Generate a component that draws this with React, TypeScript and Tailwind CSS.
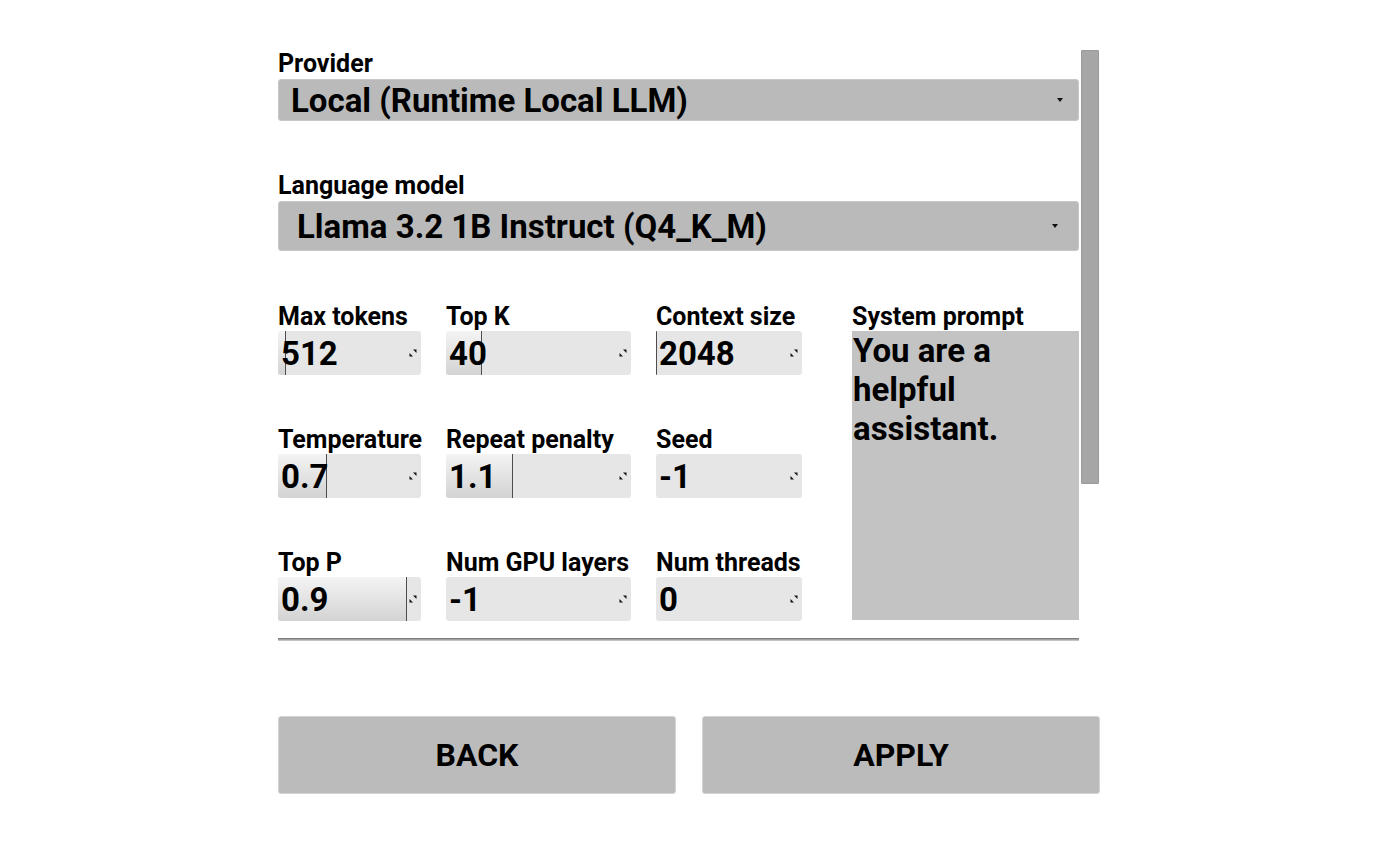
import React from "react";

interface NumField {
  label: string;
  value: string;
  width: number;
  fill: number;
}

const font = { fontFamily: "Roboto, 'Noto Sans', sans-serif" };

function SpinMark() {
  return (
    <svg width="8" height="8" viewBox="0 0 8 8" className="mr-[1px] shrink-0">
      <path d="M4 0.5h3.5v3.5z" fill="#111" />
      <path d="M0.5 4v3.5h3.5z" fill="#111" />
    </svg>
  );
}

function Caret() {
  return (
    <svg width="6" height="4" viewBox="0 0 6 4">
      <path d="M0 0h6L3 4z" fill="#111" />
    </svg>
  );
}

function NumberInput({ field }: { field: NumField }) {
  return (
    <div className="flex flex-col">
      <div className="h-[29px] text-[25px] font-bold leading-[29px] text-black whitespace-nowrap">
        {field.label}
      </div>
      <div
        className="relative flex h-[44px] items-center rounded-[3px] bg-[#e6e6e6] pr-[3px]"
        style={{ width: field.width }}
      >
        {field.fill > 0 && (
          <div
            className="absolute left-0 top-0 bottom-0 rounded-l-[3px] border-r border-[#4d4d4d] bg-gradient-to-b from-[#f4f4f4] to-[#d3d3d3]"
            style={{ width: field.fill }}
          />
        )}
        <span className="relative flex-1 pl-[3px] text-[33px] font-bold leading-none text-black">
          {field.value}
        </span>
        <SpinMark />
      </div>
    </div>
  );
}

const col1: NumField[] = [
  { label: "Max tokens", value: "512", width: 143, fill: 8 },
  { label: "Temperature", value: "0.7", width: 143, fill: 49 },
  { label: "Top P", value: "0.9", width: 143, fill: 129 },
];
const col2: NumField[] = [
  { label: "Top K", value: "40", width: 185, fill: 36 },
  { label: "Repeat penalty", value: "1.1", width: 185, fill: 67 },
  { label: "Num GPU layers", value: "-1", width: 185, fill: 0 },
];
const col3: NumField[] = [
  { label: "Context size", value: "2048", width: 146, fill: 1 },
  { label: "Seed", value: "-1", width: 146, fill: 0 },
  { label: "Num threads", value: "0", width: 146, fill: 0 },
];

export default function App() {
  return (
    <div className="min-h-[844px] bg-white text-black" style={font}>
      <div className="ml-[278px] w-[822px] pt-[48px]">
        <div className="flex gap-[2px]">
          <div className="w-[801px]">
            {/* provider */}
            <div className="h-[31px] text-[25px] font-bold leading-[31px]">Provider</div>
            <div className="flex h-[42px] items-center justify-between rounded-[3px] border border-[#c8c8c8] bg-[#bababa] pl-[12px] pr-[15px]">
              <span className="text-[33px] font-bold leading-none">
                Local (Runtime Local LLM)
              </span>
              <Caret />
            </div>

            {/* language model */}
            <div className="mt-[50px] h-[30px] text-[25px] font-bold leading-[30px]">
              Language model
            </div>
            <div className="flex h-[50px] items-center justify-between rounded-[3px] border border-[#c8c8c8] bg-[#bababa] pl-[18px] pr-[20px]">
              <span className="text-[33px] font-bold leading-none">
                Llama 3.2 1B Instruct (Q4_K_M)
              </span>
              <Caret />
            </div>

            {/* parameters */}
            <div className="mt-[51px] flex">
              {[col1, col2, col3].map((col, i) => (
                <div
                  key={i}
                  className={
                    i === 0
                      ? "flex w-[143px] flex-col gap-[50px]"
                      : i === 1
                        ? "ml-[25px] flex w-[185px] flex-col gap-[50px]"
                        : "ml-[25px] flex w-[146px] flex-col gap-[50px]"
                  }
                >
                  {col.map((f) => (
                    <NumberInput key={f.label} field={f} />
                  ))}
                </div>
              ))}
              <div className="ml-[50px] flex w-[227px] flex-col">
                <div className="h-[29px] text-[25px] font-bold leading-[29px] whitespace-nowrap">
                  System prompt
                </div>
                <div className="h-[289px] bg-[#c3c3c3] pl-[1px] text-[33px] font-bold leading-[39px]">
                  You are a
                  <br />
                  helpful
                  <br />
                  assistant.
                </div>
              </div>
            </div>

            <div className="mt-[17px] h-[3px] bg-gradient-to-b from-[#6f6f6f] to-[#d6d6d6]" />
          </div>

          {/* scrollbar */}
          <div className="mt-[2px] h-[434px] w-[18px] rounded-[1px] border border-[#9a9a9a] bg-[#a6a6a6]" />
        </div>

        <div className="mt-[75px] flex gap-[26px]">
          <button className="h-[78px] w-[398px] rounded-[3px] border border-[#d3d3d3] bg-[#bbbbbb] text-[32px] font-bold">
            BACK
          </button>
          <button className="h-[78px] w-[398px] rounded-[3px] border border-[#d3d3d3] bg-[#bbbbbb] text-[32px] font-bold">
            APPLY
          </button>
        </div>
      </div>
    </div>
  );
}
